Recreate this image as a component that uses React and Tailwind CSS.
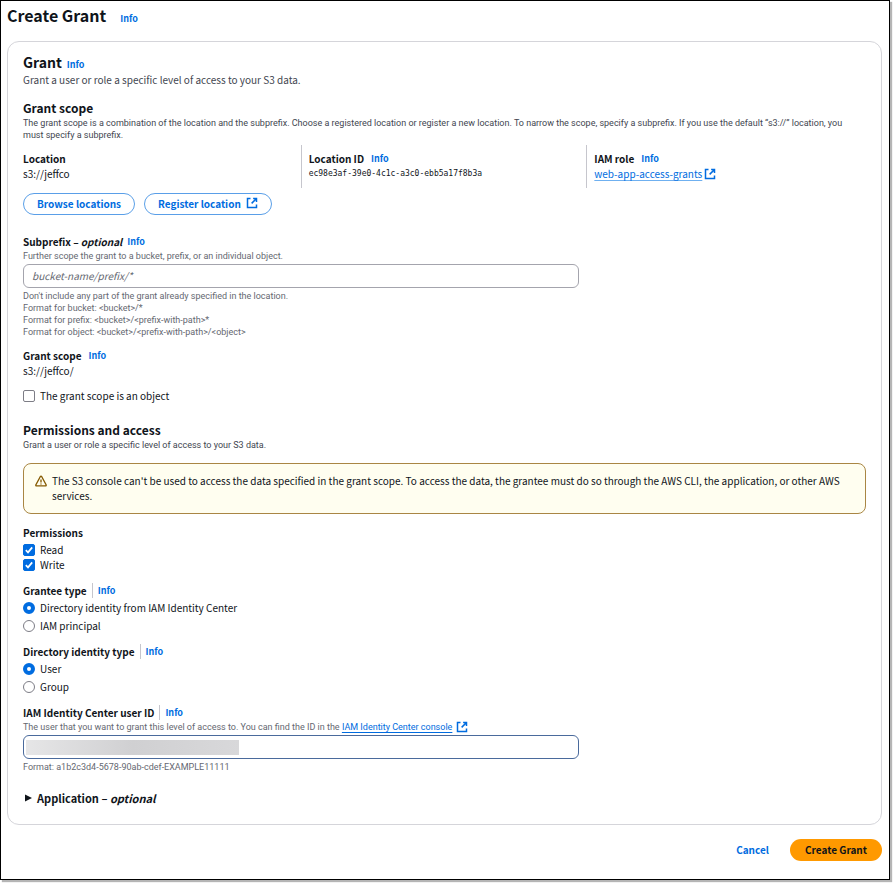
import { useState } from 'react';

function InfoLink({ className = '' }) {
  return (
    <a href="#info" className={`text-[9px] font-bold text-[#006ce0] ${className}`}>
      Info
    </a>
  );
}

function ExternalIcon() {
  return (
    <svg viewBox="0 0 16 16" className="size-3 shrink-0" fill="none" stroke="currentColor" strokeWidth="2">
      <path d="M6 2H2v12h12v-4" />
      <path d="M9.5 2H14v4.5M14 2 7.5 8.5" />
    </svg>
  );
}

function WarningIcon() {
  return (
    <svg viewBox="0 0 16 16" className="mt-0.5 size-3 shrink-0" fill="none" stroke="#855900" strokeWidth="1.8" strokeLinejoin="round">
      <path d="M7 2.3Q8 .8 9 2.3L14.8 13q.5 1.5-.9 1.5H2.1Q.7 14.5 1.2 13Z" />
      <path d="M8 6v4M8 11.2v1.6" />
    </svg>
  );
}

function OutlineButton({ children }) {
  return (
    <button
      type="button"
      className="flex h-[22px] items-center gap-[5px] rounded-full border border-[#5a9fe8] px-[13px] pb-0.5 text-[10px] font-bold text-[#006ce0]"
    >
      {children}
    </button>
  );
}

function SmallText({ className = '', children }) {
  return <div className={`font-[Roboto,sans-serif] text-[9px] leading-3 ${className}`}>{children}</div>;
}

function Checkbox({ label, checked, onChange }) {
  return (
    <label className="flex items-center gap-[5px] leading-[15px]">
      <span className="relative size-3">
        <input
          type="checkbox"
          checked={checked}
          onChange={(e) => onChange(e.target.checked)}
          className="block size-3 appearance-none rounded-[2px] border border-[#7d7d86] bg-white checked:border-[#006ce0] checked:bg-[#006ce0]"
        />
        {checked && (
          <svg viewBox="0 0 12 12" className="pointer-events-none absolute inset-0 size-3" fill="none" stroke="#fff" strokeWidth="1.7">
            <path d="M2.8 6.2 5 8.4 9.2 3.4" />
          </svg>
        )}
      </span>
      {label}
    </label>
  );
}

function RadioGroup({ title, name, options, value, onChange }) {
  return (
    <fieldset className="mt-[11px]">
      <legend className="flex items-center leading-[15px]">
        <span className="font-bold">{title}</span>
        <InfoLink className="ml-[5px] border-l border-[#c6c6cd] pl-[5px]" />
      </legend>
      <div className="mt-0.5 flex flex-col gap-[3px]">
        {options.map((option) => (
          <label key={option} className="flex items-center gap-[5px] leading-[15px]">
            <input
              type="radio"
              name={name}
              checked={value === option}
              onChange={() => onChange(option)}
              className="size-3 appearance-none rounded-full border border-[#7d7d86] bg-white checked:border-4 checked:border-[#006ce0]"
            />
            {option}
          </label>
        ))}
      </div>
    </fieldset>
  );
}

export default function App() {
  const [isObject, setIsObject] = useState(false);
  const [read, setRead] = useState(true);
  const [write, setWrite] = useState(true);
  const [granteeType, setGranteeType] = useState('Directory identity from IAM Identity Center');
  const [identityType, setIdentityType] = useState('User');
  const [subprefix, setSubprefix] = useState('');
  const [userId, setUserId] = useState('');

  return (
    <div className="bg-white pr-1 pb-1 font-['Noto_Sans_CJK_SC',sans-serif] text-[10px] text-[#0f141a]">
      <main className="border border-black pt-0.5 pr-[7px] pb-[18px] pl-1.5 shadow-[2px_2px_1px_#b5b5b5]">
        <header className="flex items-baseline gap-[14px]">
          <h1 className="text-[16px] leading-6 font-bold">Create Grant</h1>
          <InfoLink />
        </header>

        <section className="mt-[14px] rounded-xl border border-[#d5d5da] px-[15px] pt-[11px] pb-[17px]">
          <div className="flex items-baseline gap-[5px]">
            <h2 className="text-[14px] leading-[19px] font-bold">Grant</h2>
            <InfoLink />
          </div>
          <p className="leading-4 text-[#424650]">Grant a user or role a specific level of access to your S3 data.</p>

          <h3 className="mt-[11px] text-[12px] leading-[18px] font-bold">Grant scope</h3>
          <SmallText className="pr-3 text-[#424650]">
            The grant scope is a combination of the location and the subprefix. Choose a registered location or register a
            new location. To narrow the scope, specify a subprefix. If you use the default “s3://” location, you must
            specify a subprefix.
          </SmallText>

          <div className="mt-1 grid grid-cols-3 gap-[14px] leading-[15px]">
            <div className="pt-1.5 pb-[7px]">
              <div className="font-bold">Location</div>
              <div>s3://jeffco</div>
            </div>
            <div className="-ml-2 border-l border-[#c6c6cd] pt-1.5 pb-[7px] pl-[7px]">
              <div className="flex items-center gap-[7px]">
                <span className="font-bold">Location ID</span>
                <InfoLink />
              </div>
              <div className="font-['DejaVu_Sans_Mono',monospace] text-[8px]">ec98e3af-39e0-4c1c-a3c0-ebb5a17f8b3a</div>
            </div>
            <div className="-ml-2 border-l border-[#c6c6cd] pt-1.5 pb-[7px] pl-[7px]">
              <div className="flex items-center gap-[7px]">
                <span className="font-bold">IAM role</span>
                <InfoLink />
              </div>
              <a href="#role" className="flex items-center gap-0.5 text-[#006ce0]">
                <span className="underline decoration-[#6fb0f0] underline-offset-2">web-app-access-grants</span>
                <ExternalIcon />
              </a>
            </div>
          </div>

          <div className="mt-[5px] flex gap-[9px]">
            <OutlineButton>Browse locations</OutlineButton>
            <OutlineButton>
              Register location
              <ExternalIcon />
            </OutlineButton>
          </div>

          <div className="mt-[19px] flex items-center gap-[5px] leading-[15px]">
            <label htmlFor="subprefix" className="font-bold">
              Subprefix – <em>optional</em>
            </label>
            <InfoLink />
          </div>
          <SmallText className="mt-px text-[#656871]">
            Further scope the grant to a bucket, prefix, or an individual object.
          </SmallText>
          <input
            id="subprefix"
            type="text"
            placeholder="bucket-name/prefix/*"
            value={subprefix}
            onChange={(e) => setSubprefix(e.target.value)}
            className="mt-0.5 block h-6 w-[66%] rounded-md border border-[#a4a4ad] px-2 pb-0.5 placeholder:text-[#656871] placeholder:italic"
          />
          <SmallText className="mt-0.5 text-[#656871]">
            <p>Don't include any part of the grant already specified in the location.</p>
            <p>Format for bucket: &lt;bucket&gt;/*</p>
            <p>Format for prefix: &lt;bucket&gt;/&lt;prefix-with-path&gt;*</p>
            <p>Format for object: &lt;bucket&gt;/&lt;prefix-with-path&gt;/&lt;object&gt;</p>
          </SmallText>

          <div className="my-[10px] leading-[15px]">
            <div className="flex items-center gap-[7px]">
              <span className="font-bold">Grant scope</span>
              <InfoLink />
            </div>
            <div>s3://jeffco/</div>
          </div>
          <Checkbox label="The grant scope is an object" checked={isObject} onChange={setIsObject} />

          <h3 className="mt-[18px] text-[12px] leading-[18px] font-bold">Permissions and access</h3>
          <SmallText className="text-[#424650]">
            Grant a user or role a specific level of access to your S3 data.
          </SmallText>

          <div role="alert" className="mt-3 flex gap-[5px] rounded-lg border border-[#a98644] bg-[#fffef0] px-[11px] pt-[9px] pb-[10px] leading-[15px]">
            <WarningIcon />
            <p>
              The S3 console can't be used to access the data specified in the grant scope. To access the data, the
              grantee must do so through the AWS CLI, the application, or other AWS services.
            </p>
          </div>

          <fieldset className="mt-[11px]">
            <legend className="mb-0.5 leading-[15px] font-bold">Permissions</legend>
            <Checkbox label="Read" checked={read} onChange={setRead} />
            <Checkbox label="Write" checked={write} onChange={setWrite} />
          </fieldset>

          <RadioGroup
            title="Grantee type"
            name="grantee"
            options={['Directory identity from IAM Identity Center', 'IAM principal']}
            value={granteeType}
            onChange={setGranteeType}
          />
          <RadioGroup
            title="Directory identity type"
            name="identity"
            options={['User', 'Group']}
            value={identityType}
            onChange={setIdentityType}
          />

          <div className="mt-[11px] flex items-center leading-[15px]">
            <label htmlFor="user-id" className="font-bold">
              IAM Identity Center user ID
            </label>
            <InfoLink className="ml-[5px] border-l border-[#c6c6cd] pl-[5px]" />
          </div>
          <SmallText className="mt-px flex items-center gap-1 text-[#656871]">
            <span>
              The user that you want to grant this level of access to. You can find the ID in the{' '}
              <a href="#console" className="text-[#006ce0] underline underline-offset-2">
                IAM Identity Center console
              </a>
            </span>
            <span className="text-[#006ce0]">
              <ExternalIcon />
            </span>
          </SmallText>
          <div className="relative mt-0.5 w-[66%]">
            <input
              id="user-id"
              type="text"
              value={userId}
              onChange={(e) => setUserId(e.target.value)}
              className="block h-6 w-full rounded-md border border-[#4a6a9c] px-2 pb-0.5"
            />
            {/* hides the stored ID */}
            <div className="pointer-events-none absolute top-[5px] left-[3px] h-[15px] w-[213px] bg-linear-to-r from-[#e6e6e7] via-[#d0d0d2] to-[#d8d8da]" />
          </div>
          <SmallText className="mt-0.5 text-[#656871]">Format: a1b2c3d4-5678-90ab-cdef-EXAMPLE11111</SmallText>

          <button type="button" className="mt-4 flex items-center gap-1 text-[11px] leading-[18px] font-bold">
            <svg viewBox="0 0 8 8" className="ml-0.5 size-2" fill="currentColor">
              <path d="M0 .5v7L7 4Z" />
            </svg>
            <span>
              Application – <em>optional</em>
            </span>
          </button>
        </section>

        <footer className="mt-[14px] flex justify-end gap-1.5">
          <button type="button" className="h-[22px] px-[15px] pb-0.5 font-bold text-[#006ce0]">
            Cancel
          </button>
          <button type="button" className="h-[22px] rounded-full bg-[#ff9900] px-[15px] pb-0.5 font-bold">
            Create Grant
          </button>
        </footer>
      </main>
    </div>
  );
}
